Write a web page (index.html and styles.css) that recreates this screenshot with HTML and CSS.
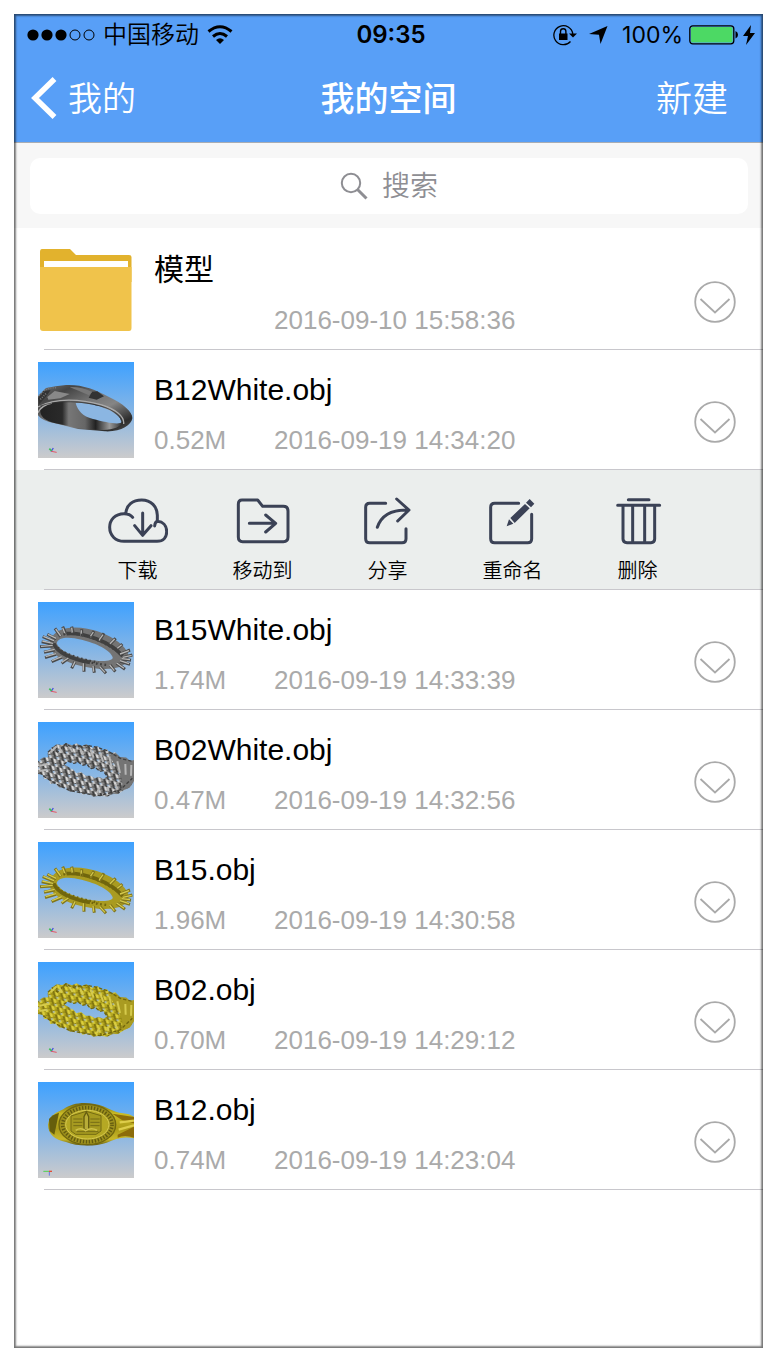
FILE: index.html
```html
<!DOCTYPE html>
<html lang="zh-CN">
<head>
<meta charset="utf-8">
<meta name="viewport" content="width=device-width, initial-scale=1">
<title>我的空间</title>
<link rel="stylesheet" href="styles.css">
</head>
<body>
<svg class="defs" aria-hidden="true">
  <defs>
    <linearGradient id="sky" x1="0" y1="0" x2="0" y2="1">
      <stop offset="0" stop-color="#3ea1ff"/><stop offset=".5" stop-color="#84b5e6"/><stop offset="1" stop-color="#cccbcc"/>
    </linearGradient>
    <linearGradient id="steel" x1="0" y1="0" x2="1" y2="1">
      <stop offset="0" stop-color="#777"/><stop offset=".2" stop-color="#444"/><stop offset=".45" stop-color="#777"/><stop offset=".6" stop-color="#858585"/><stop offset=".85" stop-color="#2c2c2c"/><stop offset="1" stop-color="#555"/>
    </linearGradient>
    <linearGradient id="inner" x1="0" y1="0" x2="1" y2="0">
      <stop offset="0" stop-color="#222"/><stop offset=".27" stop-color="#2a2a2a"/><stop offset=".35" stop-color="#777"/><stop offset=".55" stop-color="#666"/><stop offset=".68" stop-color="#222"/><stop offset=".85" stop-color="#999"/><stop offset="1" stop-color="#333"/>
    </linearGradient>
    <linearGradient id="gold" x1="0" y1="0" x2="0" y2="1">
      <stop offset="0" stop-color="#6d6410"/><stop offset=".25" stop-color="#cabb25"/><stop offset=".6" stop-color="#aa9a18"/><stop offset=".85" stop-color="#c8b82a"/><stop offset="1" stop-color="#5e560f"/>
    </linearGradient>
    <pattern id="mesh-silver" width="24" height="22" patternUnits="userSpaceOnUse" patternTransform="rotate(14)">
      <rect width="24" height="22" fill="#8a8a8a"/>
      <path d="M-2 0L12 22M22 0L36 22" stroke="#3c3c3c" stroke-width="6"/>
      <path d="M6 0L20 22" stroke="#dedede" stroke-width="6"/>
      <path d="M0 18L24 8" stroke="#4a4a4a" stroke-width="3"/>
      <rect x="11" y="14" width="6" height="5" fill="#9ab9da"/>
    </pattern>
    <pattern id="mesh-gold" width="24" height="22" patternUnits="userSpaceOnUse" patternTransform="rotate(14)">
      <rect width="24" height="22" fill="#b5a820"/>
      <path d="M-2 0L12 22M22 0L36 22" stroke="#7d720f" stroke-width="6"/>
      <path d="M6 0L20 22" stroke="#ddd03c" stroke-width="7"/>
      <path d="M0 18L24 8" stroke="#8a7d12" stroke-width="3"/>
      <rect x="11" y="14" width="6" height="5" fill="#a5b9b0"/>
    </pattern>
    <symbol id="axes" viewBox="24 21 288 288">
      <path d="M63 290L70 279" stroke="#4653dc" stroke-width="4"/><path d="M58 281L65 288" stroke="#37bd57" stroke-width="5"/><path d="M64 289L80 292" stroke="#e45565" stroke-width="3"/>
    </symbol>
    <symbol id="spiked" viewBox="24 21 288 288">
      <path class="ring-body" fill-rule="evenodd" d="M60 137C74 100 120 92 172 101C226 110 284 144 295 178C300 213 259 226 205 221C142 216 68 190 60 155ZM80 145C88 167 125 183 167 192C207 201 250 201 248 187C242 165 197 144 155 134C116 124 84 126 80 145Z"/>
      <path class="ring-shade" d="M71 145C82 175 129 194 180 202M110 116C160 112 240 139 278 183"/>
      <path class="ring-dark" d="M98 95L108 118M125 95L130 115M155 103L155 125M192 108L180 130M222 115L208 138M257 130L240 148M277 147L262 162M300 165L270 178M307 180L278 188M303 196L275 192M300 208L270 199M285 223L260 205M256 230L240 210M228 235L210 215M193 233L190 213M162 230L162 205M125 220L135 200M95 205L115 190M65 200L95 187M45 188L78 178M42 172L74 165M30 155L68 153M35 140L69 147M38 125L72 139M52 118L79 132M75 100L92 125"/>
      <path class="ring-light" d="M98 98L105 116M125 98L127 114M154 106L153 124M190 111L178 129M219 119L206 137M254 132L240 146M275 149L262 160M297 167L270 177M305 181L278 187M300 194L275 191M297 206L270 197M282 220L260 204M253 227L239 210M225 232L209 215M191 230L189 213M160 227L160 205M127 216L135 200M95 202L115 189M66 197L95 185M47 185L78 176M43 170L74 163M33 154L68 151M37 138L69 145M40 124L72 137M54 118L79 130M77 102L92 123"/>
      <path class="ring-spots" d="M83 158C105 180 154 192 205 203M100 118C151 107 228 141 269 175M100 172C135 195 180 204 230 210"/>
    </symbol>
    <symbol id="woven" viewBox="24 21 288 288">
      <path class="woven-body" fill-rule="evenodd" d="M24 139L38 128L54 127L53 113L65 98L80 88L97 90L108 84L126 91L140 85L154 93L170 88L186 98L203 93L213 105L231 103L240 115L256 112L270 127L289 128L299 138L312 136V198L300 217L282 226L264 237L246 238L232 245L210 242L190 245L176 235L157 239L143 227L120 230L107 217L88 218L76 205L60 207L58 193L42 192L38 180L24 177ZM101 148L115 139L132 145L145 141L157 151L171 148L182 161L197 158L210 169L219 167L232 184L221 191L205 186L195 190L181 182L167 182L153 171L139 175L130 164Z"/>
      <path class="woven-band" d="M236 122L256 114L270 127L289 128L299 138L312 136V198L300 217L270 230Q284 205 270 180Q262 155 236 122Z"/>
      <path class="woven-edge" d="M54 112L67 99L82 111L107 87L127 97L154 93L171 91L202 97L231 107L271 130L310 140M101 148L115 139L132 145L145 141L157 151L171 148L182 161L197 158L210 169L219 167L232 184M40 183L80 208L120 227L175 237L210 242L270 225L307 190"/>
      <path class="woven-light" d="M62 111L80 94M97 113L88 98M128 112L119 96M160 119L150 100M191 128L181 103M220 141L211 116M245 158L238 124M270 174L262 139M287 179L286 147M303 182L304 150M28 153L54 146M28 168L50 164M200 234L209 218M235 228L233 215M263 223L256 208"/>
    </symbol>
    <symbol id="more" viewBox="0 0 42 42">
      <circle cx="21" cy="21" r="19.800" fill="none" stroke="#aaa" stroke-width="1.800"/><path d="M6.500 18L21 31.500L35.500 18" fill="none" stroke="#aaa" stroke-width="1.800"/>
    </symbol>
  </defs>
</svg>

<div class="phone">
  <header class="top">
    <div class="status">
      <div class="status-left">
        <svg class="signal" viewBox="0 0 68 12"><g><circle cx="6" cy="6" r="5.600"/><circle cx="20" cy="6" r="5.600"/><circle cx="34" cy="6" r="5.600"/></g><g fill="none" stroke="#000"><circle cx="48" cy="6" r="5"/><circle cx="62" cy="6" r="5"/></g></svg>
        <span class="carrier">中国移动</span>
        <svg class="wifi" viewBox="0 0 26 20"><path d="M1.500 6.500Q13-3 24.500 6.500M6 11.500Q13 5.500 20 11.500" fill="none" stroke="#000" stroke-width="3"/><path d="M9 15Q13 11.500 17 15L13 19Z"/></svg>
      </div>
      <time class="clock">09:35</time>
      <div class="status-right">
        <svg class="lock" viewBox="0 0 24 22"><path d="M17.500 17.500A9.500 9.500 0 1 1 19.800 10" fill="none" stroke="#000" stroke-width="1.300"/><path d="M16 9.500H24L20 13.500ZM6 9.500H14.500V16H6Z"/><path d="M7.500 10V7.500a2.700 2.700 0 0 1 5.400 0V10" fill="none" stroke="#000" stroke-width="1.400"/></svg>
        <svg class="location" viewBox="0 0 19 18"><path d="M18.500 0L11.500 18L10 8.700L0 8Z"/></svg>
        <span class="percent">100%</span>
        <svg class="battery" viewBox="0 0 50 20"><rect x=".8" y=".8" width="44" height="18" rx="3" fill="none" stroke="#000" stroke-width="1.300"/><rect x="2" y="2" width="41.500" height="15.500" rx="1.500" fill="#4cd964"/><path d="M46.500 6Q49 7 49 9.700T46.500 13.500Z"/></svg>
        <svg class="bolt" viewBox="0 0 12 20"><path d="M8 0L0 11H5L3 20L12 8H7Z"/></svg>
      </div>
    </div>
    <nav class="nav">
      <a class="back" href="#"><svg viewBox="0 0 26 42"><path d="M23.500 2L4 21L23.500 40" fill="none" stroke="#fff" stroke-width="5.500"/></svg><span class="nav-text">我的</span></a>
      <h1 class="nav-text">我的空间</h1>
      <button class="create nav-text" type="button">新建</button>
    </nav>
  </header>

  <form class="search" role="search">
    <label class="field">
      <svg viewBox="0 0 28 28"><g fill="none" stroke="#8e8e93" stroke-width="2"><circle cx="11" cy="11" r="9.200"/><path d="M17.500 17.500L26.500 26.500" stroke-width="3"/></g></svg>
      <input type="text" placeholder="搜索" aria-label="搜索">
    </label>
  </form>

  <main>
    <ul class="files">
      <li class="file">
        <svg class="thumb" viewBox="0 0 96 96"><path d="M2 10Q2 7 4 7H32L38 13H91Q93.500 13 93.500 15V40H2Z" fill="#e2b22d"/><path d="M6 19H90V30H6Z" fill="#fff"/><path d="M2 25H93.500V86Q93.500 89 91 89H5Q2 89 2 86Z" fill="#f0c34b"/></svg>
        <div class="info"><h2>模型</h2><p><span></span><time>2016-09-10 15:58:36</time></p></div>
        <button class="more" type="button" aria-label="更多"><svg><use href="#more"/></svg></button>
      </li>
      <li class="file">
        <svg class="thumb" viewBox="24 21 288 288">
          <rect x="24" y="21" width="288" height="288" fill="url(#sky)"/>
          <path d="M24 124L48 99L77 94L108 90C155 88 196 103 237 126C278 145 309 171 307 190C304 211 273 231 225 229L144 222L75 205Q36 198 24 181Z" fill="url(#steel)"/>
          <path d="M41 148C92 135 158 135 214 153C255 166 280 188 274 206C262 227 205 229 144 219L76 205C44 198 29 182 31 165Q32 154 41 148Z" fill="url(#inner)"/>
          <path d="M137 144C191 141 270 169 275 201C270 211 227 202 189 192C157 184 143 166 137 144Z" fill="#8bb6e2"/>
          <path d="M24 156C78 126 155 133 215 150C257 163 284 184 281 207M24 173Q36 149 66 144" fill="none" stroke="#aaa" stroke-width="4"/>
          <path d="M30 153C88 134 156 138 213 153C255 166 278 187 275 207" fill="none" stroke="#333" stroke-width="2"/>
          <path d="M24 130L40 108L62 105L48 125L28 147ZM176 128L186 110L202 109L222 124L200 134Z" fill="#333"/>
          <path d="M52 126L74 108L119 117L91 130L55 134Z" fill="#888"/>
          <path d="M119 96Q157 95 186 111L177 121Q140 105 119 96Z" fill="#777"/>
          <path d="M27 122L45 105L59 99L78 98M31 133L49 115" fill="none" stroke="#777" stroke-width="5" stroke-dasharray="3 4"/>
          <use href="#axes" x="24" y="21" width="288" height="288"/>
        </svg>
        <div class="info"><h2>B12White.obj</h2><p><span>0.52M</span><time>2016-09-19 14:34:20</time></p></div>
        <button class="more" type="button" aria-label="更多"><svg><use href="#more"/></svg></button>
      </li>
      <li class="tools">
        <button type="button"><svg viewBox="51 96 180 144"><path d="M125 157Q117 146 99 146C72 146 56 165 56 187C56 212 74 229 99 229H198C218 229 227 216 227 200C227 181 215 170 200 169Q192 170 191 183M105 145C105 121 125 105 152 105C180 105 199 125 199 151V169M155 144V209M131 182L155 211L180 182"/></svg>下载</button>
        <button type="button"><svg viewBox="429 96 180 144"><path d="M456 105H503L518 124H580Q594 124 594 138V216Q594 230 580 230H458Q445 230 445 216V118Q445 105 456 105ZM478 175H556M527 150L557 175L527 201"/></svg>移动到</button>
        <button type="button"><svg viewBox="801 96 180 144"><path d="M884 115H836Q824 115 824 127V221Q824 233 836 233H933Q945 233 945 221V191M859 187C870 153 897 133 953 135M917 102L954 135L920 168"/></svg>分享</button>
        <button type="button"><svg viewBox="186 96 180 144"><path d="M293 115H221Q209 115 209 127V221Q209 233 221 233H320Q332 233 332 221V148"/><path class="solid" d="M257 184L264 163L277 176ZM268 159L312 117L326 130L281 174ZM315 113L326 102L340 116L330 127Z"/></svg>重命名</button>
        <button type="button"><svg viewBox="561 96 180 144"><path d="M622 104H684M590 121H716M606 124V222Q606 233 618 233H690Q701 233 701 222V124M635 124V231M671 124V231"/></svg>删除</button>
      </li>
      <li class="file">
        <svg class="thumb silver" viewBox="0 0 96 96"><rect width="96" height="96" fill="url(#sky)"/><use href="#spiked"/><use href="#axes"/></svg>
        <div class="info"><h2>B15White.obj</h2><p><span>1.74M</span><time>2016-09-19 14:33:39</time></p></div>
        <button class="more" type="button" aria-label="更多"><svg><use href="#more"/></svg></button>
      </li>
      <li class="file">
        <svg class="thumb silver" viewBox="0 0 96 96"><rect width="96" height="96" fill="url(#sky)"/><use href="#woven"/><use href="#axes"/></svg>
        <div class="info"><h2>B02White.obj</h2><p><span>0.47M</span><time>2016-09-19 14:32:56</time></p></div>
        <button class="more" type="button" aria-label="更多"><svg><use href="#more"/></svg></button>
      </li>
      <li class="file">
        <svg class="thumb gold" viewBox="0 0 96 96"><rect width="96" height="96" fill="url(#sky)"/><use href="#spiked"/><use href="#axes"/></svg>
        <div class="info"><h2>B15.obj</h2><p><span>1.96M</span><time>2016-09-19 14:30:58</time></p></div>
        <button class="more" type="button" aria-label="更多"><svg><use href="#more"/></svg></button>
      </li>
      <li class="file">
        <svg class="thumb gold" viewBox="0 0 96 96"><rect width="96" height="96" fill="url(#sky)"/><use href="#woven"/><use href="#axes"/></svg>
        <div class="info"><h2>B02.obj</h2><p><span>0.70M</span><time>2016-09-19 14:29:12</time></p></div>
        <button class="more" type="button" aria-label="更多"><svg><use href="#more"/></svg></button>
      </li>
      <li class="file">
        <svg class="thumb" viewBox="24 21 288 288">
          <rect x="24" y="21" width="288" height="288" fill="url(#sky)"/>
          <path d="M54 149C58 121 78 113 100 103C125 84 160 80 194 87C233 94 247 112 279 115Q298 116 312 125V190C281 183 256 191 230 203C191 216 139 214 108 201C75 194 55 179 54 149Z" fill="url(#gold)"/>
          <path d="M57 132Q67 119 87 113L73 179L59 168Z" fill="#665e0c"/>
          <path d="M247 116L312 126V145L277 136ZM263 179L312 155V188Q283 178 263 188Z" fill="#8c6c0a"/>
          <path d="M269 142L312 137M266 164L312 151" stroke="#ddcd4a" stroke-width="7"/>
          <ellipse cx="172" cy="149" rx="85" ry="60" fill="#9e911d" stroke="#71670e" stroke-width="4"/>
          <ellipse cx="172" cy="149" rx="74" ry="51" fill="none" stroke="#635b10" stroke-width="11" stroke-dasharray="4 5"/>
          <ellipse cx="172" cy="149" rx="65" ry="43" fill="#b5a824" stroke="#d8cb50" stroke-width="3"/>
          <path d="M123 123L169 109L213 122V168L198 178H137L123 168Z" fill="#a69a20" stroke="#746a12" stroke-width="3"/>
          <path d="M130 132H157M130 142H157M130 152H157M181 132H209M181 142H209M181 152H209M140 170H205" stroke="#766d16" stroke-width="3"/>
          <path d="M162 164V125L169 111L176 125V164Z" fill="#b8ac38" stroke="#665d10" stroke-width="4"/>
          <path d="M137 166Q153 156 167 167Q183 156 201 166" fill="none" stroke="#cfc24b" stroke-width="5"/>
          <path d="M40 289H57" stroke="#52cf51" stroke-width="3"/><path d="M57 289H66" stroke="#e34d36" stroke-width="4"/><path d="M58 291V302" stroke="#6875e5" stroke-width="3"/>
        </svg>
        <div class="info"><h2>B12.obj</h2><p><span>0.74M</span><time>2016-09-19 14:23:04</time></p></div>
        <button class="more" type="button" aria-label="更多"><svg><use href="#more"/></svg></button>
      </li>
    </ul>
  </main>
</div>
</body>
</html>
```

FILE: styles.css
```css
* { box-sizing: border-box; }
body {
  display: flex;
  min-height: 100vh;
  margin: 0;
  padding: 14px;
  background: #fff;
  font-family: "Liberation Sans", "Noto Sans CJK SC", sans-serif;
  color: #000;
}
button, input { font: inherit; color: inherit; border: 0; padding: 0; background: none; }
button { cursor: pointer; }
h1, h2, p, ul { margin: 0; padding: 0; font-weight: 400; }
svg { display: block; flex: none; }
.defs { position: absolute; width: 0; height: 0; }

.phone { position: relative; flex: 1; min-width: 0; }
.phone::after {
  content: "";
  position: absolute;
  inset: 0;
  pointer-events: none;
  box-shadow: inset 0 0 2px 2px rgba(0, 0, 0, .42), inset 0 0 2px 1px rgba(0, 0, 0, .25);
}

.top { background: #589ff7; border-bottom: 1px solid #a9adb3; }
.status {
  display: grid;
  grid-template-columns: 1fr auto 1fr;
  align-items: center;
  height: 40px;
  padding: 2px 8px 0 13px;
  font-family: Inter, "Noto Sans CJK SC", sans-serif;
  font-size: 24px;
  line-height: 36px;
}
.status-left, .status-right { display: flex; align-items: center; }
.status-right { justify-content: flex-end; }
.signal { width: 68px; height: 12px; }
.carrier { margin: 0 8px; font-weight: 350; }
.wifi { width: 26px; height: 20px; }
.clock { font-weight: 600; }
.lock { width: 24px; height: 22px; margin-right: 12px; }
.location { width: 19px; height: 18px; margin-right: 14px; }
.percent { margin-right: 6px; font-size: 23px; }
.battery { width: 50px; height: 20px; }
.bolt { width: 12px; height: 20px; margin-left: 4px; }

.nav {
  display: grid;
  grid-template-columns: 1fr auto 1fr;
  align-items: center;
  height: 88px;
  padding: 0 35px 0 17px;
  font-family: "Noto Sans CJK SC", sans-serif;
  font-size: 34px;
  color: #fff;
}
.back { display: flex; align-items: center; gap: 11px; color: inherit; text-decoration: none; font-weight: 350; }
.back svg { width: 26px; height: 42px; }
.nav-text { padding-bottom: 4px; }
.nav h1 { font-size: 34px; font-weight: 500; padding-left: 18px; }
.create { justify-self: end; font-size: 36px; font-weight: 350; }

.search { padding: 15px 15px 14px 16px; background: #f7f7f7; }
.field { display: flex; align-items: center; justify-content: center; gap: 14px; height: 56px; border-radius: 10px; background: #fff; }
.field svg { width: 28px; height: 28px; }
.field input { width: 56px; height: 48px; padding-bottom: 4px; outline: 0; font: 350 28px "Noto Sans CJK SC", sans-serif; }
.field input::placeholder { color: #8e8e93; opacity: 1; }

.files { list-style: none; padding-top: 2px; }
.file {
  display: flex;
  height: 120px;
  padding: 12px 27px 0 24px;
  background: linear-gradient(#c8c7cc, #c8c7cc) 30px 100% / 100% 1px no-repeat;
}
.thumb { width: 96px; height: 96px; }
.info { flex: 1; min-width: 0; padding: 8px 0 0 20px; }
.info h2 { font-size: 30px; line-height: 40px; }
.info p { display: flex; margin-top: 14px; font-size: 26px; line-height: 32px; color: #aaa; }
.info span { width: 120px; }
.more { width: 42px; height: 42px; margin-top: 39px; }
.more svg { width: 42px; height: 42px; }

.tools {
  display: grid;
  grid-template-columns: repeat(5, 1fr);
  height: 120px;
  padding: 0 63px 0 61px;
  background: linear-gradient(#c8c7cc, #c8c7cc) 30px 100% / 100% 1px no-repeat, #ebeeed;
}
.tools button {
  display: flex;
  flex-direction: column;
  align-items: center;
  gap: 10px;
  padding-top: 27px;
  font: 350 20px/30px "Noto Sans CJK SC", sans-serif;
}
.tools svg { width: 60px; height: 48px; fill: none; stroke: #3b4256; stroke-width: 9; stroke-linejoin: round; stroke-linecap: round; }
.tools .solid { fill: #3b4256; stroke: none; }

.silver { --body: #747474; --shade: #404040; --dark: #4a4a4a; --light: #b6b6b6; --mesh: url(#mesh-silver); }
.gold { --body: #a99b21; --shade: #71660d; --dark: #82761b; --light: #d5ca4c; --mesh: url(#mesh-gold); }
.ring-body { fill: var(--body); }
.ring-shade, .ring-dark, .ring-light, .ring-spots, .woven-edge, .woven-light { fill: none; }
.ring-shade { stroke: var(--shade); stroke-width: 11; }
.ring-dark { stroke: var(--dark); stroke-width: 9; }
.ring-light { stroke: var(--light); stroke-width: 4; }
.ring-spots { stroke: var(--shade); stroke-width: 7; stroke-dasharray: 5 8; }
.woven-body { fill: var(--mesh); }
.woven-band { fill: var(--body); }
.woven-edge { stroke: var(--shade); stroke-width: 4; stroke-dasharray: 10 6; }
.woven-light { stroke: var(--light); stroke-width: 6; }
```
